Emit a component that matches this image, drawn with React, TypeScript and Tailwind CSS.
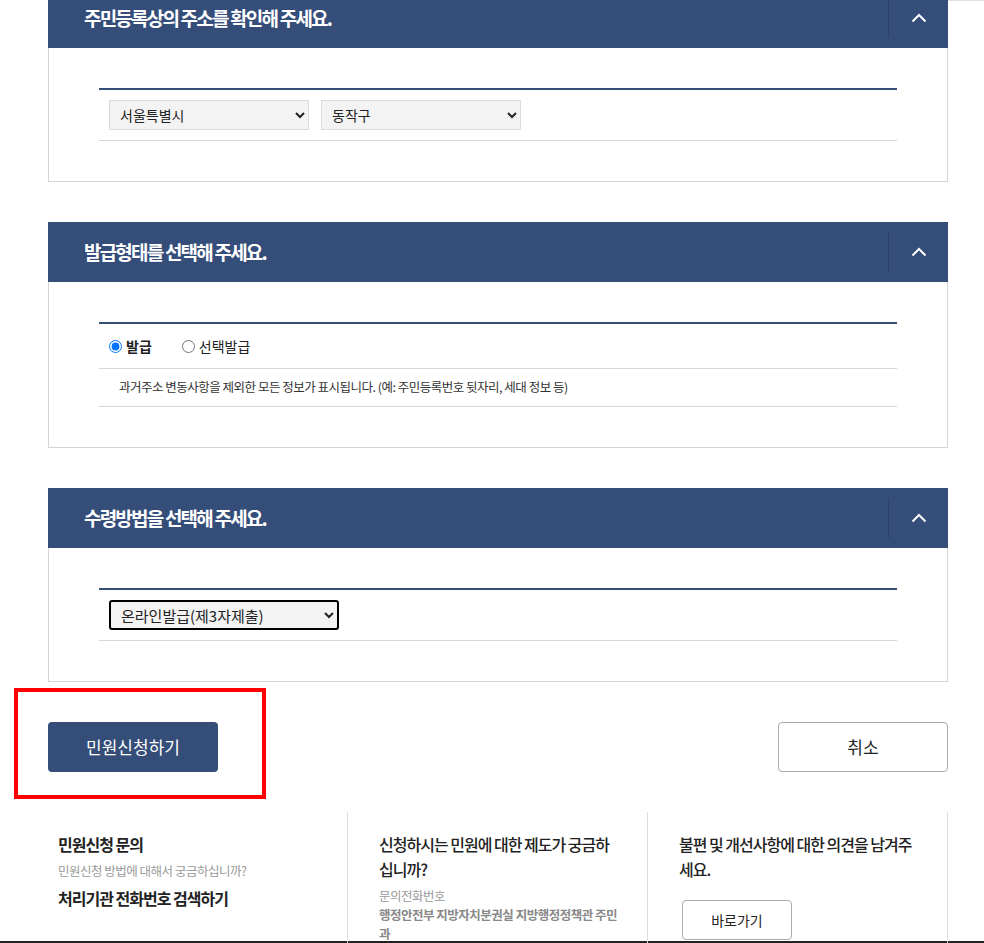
import type { ReactNode } from "react";

const font = { fontFamily: '"Noto Sans CJK KR", "Noto Sans", sans-serif' };

function Chevron() {
  return (
    <svg width="16" height="10" viewBox="0 0 16 10" fill="none">
      <path d="M1.5 8.5 L8 2 L14.5 8.5" stroke="#fff" strokeWidth="2" />
    </svg>
  );
}

function Panel({ title, children, className = "" }: { title: string; children: ReactNode; className?: string }) {
  return (
    <section className={className}>
      <div className="flex h-[60px] items-center justify-between bg-[#344d79] pl-[36px]">
        <h2 className="text-[19px] font-bold tracking-[-1.8px] text-white">{title}</h2>
        <div className="flex h-[40px] w-[60px] items-center justify-center border-l border-[#2a406a]">
          <Chevron />
        </div>
      </div>
      <div className="border-x border-b border-[#d5d5d5] px-[50px] py-[40px]">
        <div className="border-t-2 border-[#344d79]">{children}</div>
      </div>
    </section>
  );
}

export default function App() {
  return (
    <div className="relative h-[943px] overflow-hidden bg-white text-[#222]" style={font}>
      <div className="absolute right-0 top-0 h-px w-[36px] bg-[#e3e3e3]" />

      <div className="ml-[48px] -mt-[12px] w-[900px]">
        <Panel title="주민등록상의 주소를 확인해 주세요.">
          <div className="flex gap-[12px] border-b border-[#d7d7d7] px-[10px] py-[10px]">
            <select className="h-[30px] w-[200px] border border-[#dcdcdc] bg-[#f3f3f3] px-[6px] text-[14px] text-[#222]">
              <option>서울특별시</option>
            </select>
            <select className="h-[30px] w-[200px] border border-[#dcdcdc] bg-[#f3f3f3] px-[6px] text-[14px] text-[#222]">
              <option>동작구</option>
            </select>
          </div>
        </Panel>

        <Panel title="발급형태를 선택해 주세요." className="mt-[40px]">
          <div className="flex h-[45px] items-center gap-[30px] border-b border-[#d7d7d7] px-[10px]">
            <label className="flex items-center gap-[4px] text-[14px] font-bold">
              <input type="radio" name="kind" defaultChecked className="h-[13px] w-[13px]" />
              발급
            </label>
            <label className="flex items-center gap-[4px] text-[14px]">
              <input type="radio" name="kind" className="h-[13px] w-[13px]" />
              선택발급
            </label>
          </div>
          <p className="flex h-[38px] items-center border-b border-[#d7d7d7] px-[20px] text-[12.5px] tracking-[-0.5px] text-[#333]">
            과거주소 변동사항을 제외한 모든 정보가 표시됩니다. (예: 주민등록번호 뒷자리, 세대 정보 등)
          </p>
        </Panel>

        <Panel title="수령방법을 선택해 주세요." className="mt-[40px]">
          <div className="border-b border-[#d7d7d7] px-[10px] py-[10px]">
            <select className="h-[30px] w-[230px] rounded-[3px] border-2 border-black bg-[#f3f3f3] px-[6px] text-[15px] text-[#222]">
              <option>온라인발급(제3자제출)</option>
            </select>
          </div>
        </Panel>

        <div className="mt-[40px] flex items-center justify-between">
          <div className="relative">
            <button className="h-[50px] w-[170px] rounded-[4px] bg-[#344d79] text-[17px] text-white">민원신청하기</button>
            <div className="absolute -left-[34px] -top-[34px] -right-[48px] -bottom-[27px] border-4 border-[#ff0000]" />
          </div>
          <button className="h-[50px] w-[170px] rounded-[4px] border border-[#aaa] bg-white text-[17px] text-[#222]">취소</button>
        </div>

        <div className="mt-[40px] grid h-[129px] grid-cols-3">
          <div className="border-r border-[#ddd] pl-[10px] pr-[30px] pt-[20px]">
            <h3 className="text-[16px] font-bold leading-[25px] tracking-[-1px]">민원신청 문의</h3>
            <p className="mt-[4px] text-[12.5px] leading-[20px] tracking-[-0.5px] text-[#999]">민원신청 방법에 대해서 궁금하십니까?</p>
            <p className="mt-[5px] text-[16px] font-bold leading-[25px] tracking-[-1px]">처리기관 전화번호 검색하기</p>
          </div>
          <div className="border-r border-[#ddd] pl-[31px] pr-[30px] pt-[20px]">
            <h3 className="text-[16px] font-medium leading-[25px] tracking-[-1px]">신청하시는 민원에 대한 제도가 궁금하십니까?</h3>
            <p className="mt-[4px] text-[12.5px] leading-[19px] tracking-[-0.5px] text-[#999]">문의전화번호</p>
            <p className="text-[12.5px] font-bold leading-[19px] tracking-[-0.5px] text-[#888]">행정안전부 지방자치분권실 지방행정정책관 주민과</p>
          </div>
          <div className="border-r border-[#ddd] pl-[31px] pr-[30px] pt-[20px]">
            <h3 className="text-[16px] font-medium leading-[25px] tracking-[-1px]">불편 및 개선사항에 대한 의견을 남겨주세요.</h3>
            <button className="ml-[3px] mt-[18px] h-[40px] w-[110px] rounded-[4px] border border-[#aaa] bg-white text-[14px]">바로가기</button>
          </div>
        </div>
      </div>
      <div className="h-[2px] w-full bg-[#222]" />
    </div>
  );
}
